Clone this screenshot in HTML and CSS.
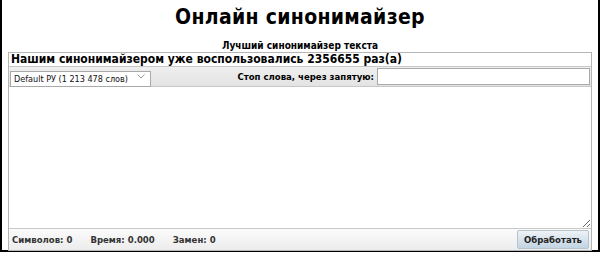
FILE: index.html
```html
<!DOCTYPE html>
<html lang="ru">
<head>
  <meta charset="UTF-8">
  <title>Онлайн синонимайзер</title>
  <link rel="stylesheet" href="styles.css">
</head>
<body>
  <div class="frame">
    <h1>Онлайн синонимайзер</h1>
    <div class="subtitle">Лучший синонимайзер текста</div>
    <div class="box">
      <div class="counter">Нашим синонимайзером уже воспользовались 2356655 раз(а)</div>
      <div class="toolbar">
        <div class="dict-wrap">
          <select class="dict">
            <option>Default РУ (1 213 478 слов)</option>
          </select>
          <svg class="chev" width="8" height="5" viewBox="0 0 8 5"><path d="M0.5 0.5 L4 4 L7.5 0.5" fill="none" stroke="#999" stroke-width="1"/></svg>
        </div>
        <label class="stop-label">Стоп слова, через запятую:</label>
        <input class="stop-input" type="text">
      </div>
      <div class="text-wrap">
        <textarea class="text"></textarea>
      </div>
      <div class="status">
        <span>Символов: 0</span>
        <span>Время: 0.000</span>
        <span>Замен: 0</span>
        <button class="btn">Обработать</button>
      </div>
    </div>
  </div>
</body>
</html>
```

FILE: styles.css
```css
body {
  margin: 0;
  background: #fff;
  font-family: "DejaVu Sans Condensed", "DejaVu Sans", sans-serif;
  color: #000;
}
.frame {
  box-sizing: border-box;
  width: 600px;
  height: 252px;
  border: 2px solid #000;
  border-top: none;
  padding: 0 6px;
}
h1 {
  margin: 0;
  padding-top: 5px;
  height: 31px;
  text-align: center;
  font-size: 21px;
  font-weight: bold;
  letter-spacing: 0.3px;
}
.subtitle {
  text-align: center;
  font-size: 10px;
  font-weight: bold;
  padding-top: 4px;
  height: 12px;
}
.box {
  border: 1px solid #b5b5b5;
  display: flex;
  flex-direction: column;
}
.counter {
  font-size: 12px;
  font-weight: bold;
  padding: 0 2px;
  height: 13px;
  line-height: 13px;
  border-bottom: 1px solid #c8c8c8;
}
.toolbar {
  display: flex;
  align-items: center;
  height: 19px;
  background: linear-gradient(#efefef, #e3e3e3);
  border-bottom: 1px solid #c8c8c8;
  padding: 0 1px;
  gap: 3px;
}
.dict-wrap {
  position: relative;
}
.dict {
  appearance: none;
  -webkit-appearance: none;
  width: 141px;
  height: 16px;
  font-size: 9px;
  font-family: "DejaVu Sans Condensed", sans-serif;
  border: 1px solid #a9a9a9;
  border-radius: 0;
  background: #fff;
  padding: 0 3px;
  color: #111;
}
.chev {
  position: absolute;
  right: 6px;
  top: 7px;
  pointer-events: none;
}
.stop-label {
  margin-left: auto;
  font-size: 9.5px;
  font-weight: bold;
}
.stop-input {
  width: 213px;
  height: 17px;
  box-sizing: border-box;
  border: 1px solid #a9a9a9;
  padding: 0;
}
.text-wrap {
  height: 141px;
  border-bottom: 1px solid #c8c8c8;
}
.text {
  display: block;
  height: 141px;
  width: 100%;
  border: none;
  resize: vertical;
  margin: 0;
  padding: 2px;
  box-sizing: border-box;
  outline: none;
}
.status {
  display: flex;
  align-items: center;
  height: 21px;
  background: linear-gradient(#fbfbfb, #ececec);
  padding: 0 2px 0 3px;
  gap: 18px;
  font-size: 9.5px;
  font-weight: bold;
  color: #333;
}
.btn {
  margin-left: auto;
  width: 72px;
  height: 19px;
  border: 1px solid #b8c4cc;
  border-radius: 2px;
  background: linear-gradient(#eef3f7, #c2d4e2);
  font-size: 9.5px;
  font-weight: bold;
  font-family: "DejaVu Sans Condensed", sans-serif;
  color: #222;
  padding: 0;
}
```
